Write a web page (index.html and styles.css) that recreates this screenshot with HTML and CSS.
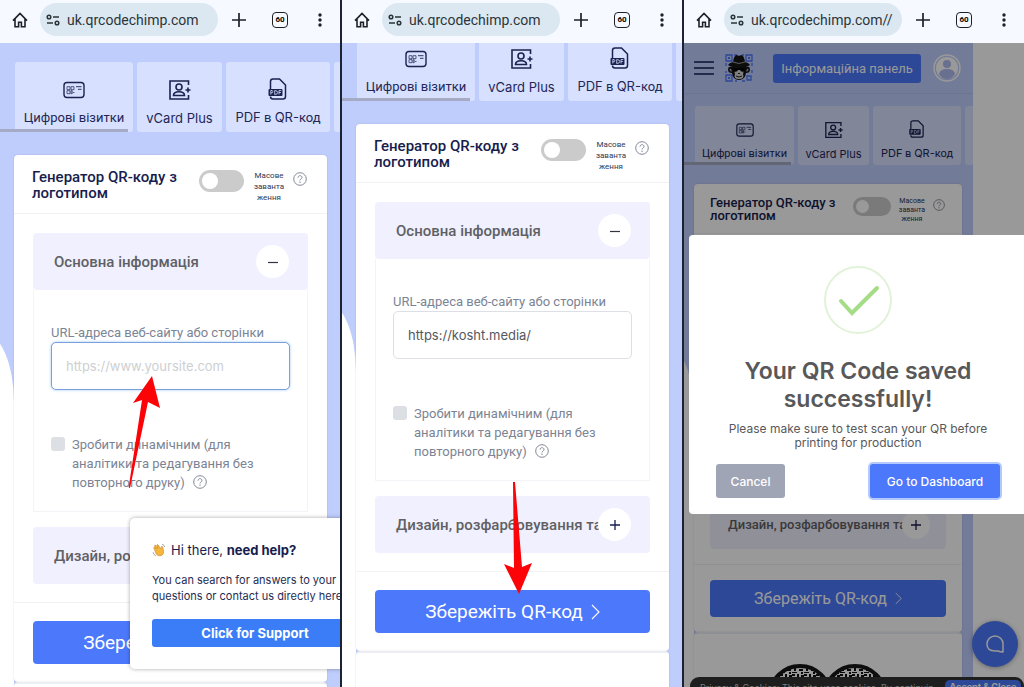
FILE: index.html
```html
<!DOCTYPE html>
<html lang="uk">
<head>
<meta charset="utf-8">
<meta name="viewport" content="width=device-width, initial-scale=1">
<title>QR-код генератор</title>
<link rel="stylesheet" href="styles.css">
</head>
<body>
<svg class="sprite" aria-hidden="true">
  <symbol id="i-home" viewBox="0 0 16 16"><path d="M1 8.6 8 1.4l7 7.2M3 6.8v8h3.600v-4.500h2.800v4.500H13v-8" fill="none" stroke="#1e2126" stroke-width="1.600"/></symbol>
  <symbol id="i-tune" viewBox="0 0 14 12"><g fill="none" stroke="#2b3438" stroke-width="1.500"><circle cx="3" cy="3" r="1.800"/><path d="M7 3h6M1 9h6"/><circle cx="11" cy="9" r="1.800"/></g></symbol>
  <symbol id="i-plus" viewBox="0 0 14 14"><path d="M7 0v14M0 7h14" stroke="#1e2126" stroke-width="1.700"/></symbol>
  <symbol id="i-dots" viewBox="0 0 4 14"><g fill="#1e2126"><circle cx="2" cy="2" r="1.700"/><circle cx="2" cy="7" r="1.700"/><circle cx="2" cy="12" r="1.700"/></g></symbol>
  <symbol id="i-add" viewBox="0 0 10 10"><path d="M5 0v10M0 5h10" stroke="#171d4e" stroke-width="1.300"/></symbol>
  <symbol id="i-sub" viewBox="0 0 10 10"><path d="M0 5.500h10" stroke="#33343f" stroke-width="1.200"/></symbol>
  <symbol id="i-card" viewBox="0 0 22 22"><rect x="1" y="3.500" width="20" height="15" rx="3" fill="none" stroke="#1b2250" stroke-width="1.400"/><path d="M4 7.700h3v3H4zM8 7.700h3v3H8zM4 11.700h3v3H4zM8 11.700h1.200v3H8zM10 13.500h1.500" fill="none" stroke="#1b2250" stroke-width=".7"/><path d="M13 7.700h5.500M15 10.300h3.500" stroke="#1b2250" stroke-width=".9"/></symbol>
  <symbol id="i-vcard" viewBox="0 0 22 22"><g fill="none" stroke="#1b2250" stroke-width="1.600"><path d="M19.500 6V2H1v18h18.500v-4"/><circle cx="10" cy="8" r="3"/><path d="M4.500 16.500c0-5 11-5 11 0z"/><path d="M19 8.500v5M16.500 11h5"/></g></symbol>
  <symbol id="i-pdf" viewBox="0 0 22 22"><path d="M3.500 11V3.500q0-2.500 2.500-2.500h6.500l6 6v11.500q0 2.500-2.500 2.500H6q-2.500 0-2.500-2.500" fill="none" stroke="#1b2250" stroke-width="1.500"/><rect x="1.500" y="11" width="14" height="7" rx="1" fill="#1b2250"/><path d="M3.800 16.500v-4h1.400q1.200 1.200 0 2.300H3.800M7.700 12.500v4q3 0 3-2t-3-2M12 16.500v-4h2.300M12 14.500h1.900" fill="none" stroke="#d6dffd" stroke-width=".8"/></symbol>
  <symbol id="i-help" viewBox="0 0 14 14"><circle cx="7" cy="7" r="6.300" fill="none" stroke="#838996"/><path d="M5 5.700c0-2.700 4-2.700 4-.2 0 1.500-2 1.600-2 3" fill="none" stroke="#838996"/><circle cx="7" cy="10.300" r=".7" fill="#838996"/></symbol>
  <symbol id="i-chevron" viewBox="0 0 9 16"><path d="m1 1 7 7-7 7" fill="none" stroke="#fff" stroke-width="1.100"/></symbol>
</svg>

<main class="board">

<section class="phone">
  <header class="bar">
    <button class="bar-btn" aria-label="Home"><svg class="ic-home"><use href="#i-home"/></svg></button>
    <div class="pill"><svg class="ic-tune"><use href="#i-tune"/></svg><span>uk.qrcodechimp.com</span></div>
    <button class="bar-btn" aria-label="New tab"><svg class="ic-plus"><use href="#i-plus"/></svg></button>
    <button class="bar-btn count">60</button>
    <button class="bar-btn" aria-label="Menu"><svg class="ic-dots"><use href="#i-dots"/></svg></button>
  </header>
  <div class="view"><div class="page">
    <nav class="tabs">
      <a class="tab tab-a" href="#"><svg><use href="#i-card"/></svg><span>Цифрові візитки</span></a>
      <a class="tab tab-b" href="#"><svg><use href="#i-vcard"/></svg><span class="lat">vCard Plus</span></a>
      <a class="tab tab-c" href="#"><svg><use href="#i-pdf"/></svg><span><i class="lat">PDF</i> в <i class="lat">QR-</i>код</span></a>
      <a class="tab tab-d" href="#" aria-label="Далі"></a>
      <span class="scroll"></span>
    </nav>
    <div class="card">
      <div class="card-head">
        <h2>Генератор QR-коду з логотипом</h2>
        <label class="bulk"><input class="switch" type="checkbox"><span>Масове<br>заванта<br>ження</span></label>
        <svg class="help"><use href="#i-help"/></svg>
      </div>
      <div class="card-body">
        <div class="acc">
          <div class="acc-head"><h3>Основна інформація</h3><button class="round" aria-label="Згорнути"><svg><use href="#i-sub"/></svg></button></div>
          <div class="acc-body">
            <label class="field" for="url1">URL-адреса веб-сайту або сторінки</label>
            <input class="url focus" id="url1" type="url" placeholder="https://www.yoursite.com">
            <div class="check"><input type="checkbox" id="dyn1"><label for="dyn1">Зробити динамічним (для аналітики та редагування без повторного друку) <svg class="help"><use href="#i-help"/></svg></label></div>
          </div>
        </div>
        <div class="acc"><div class="acc-head second"><h3>Дизайн, розфарбовування та</h3><button class="round" aria-label="Розгорнути"><svg><use href="#i-add"/></svg></button></div></div>
      </div>
      <div class="card-foot"><button class="save">Збережіть QR-код <svg><use href="#i-chevron"/></svg></button></div>
    </div>
    <div class="card next"></div>
  </div></div>
  <aside class="support">
    <p class="hi"><svg viewBox="0 0 16 16" aria-hidden="true"><path d="M3 8 1.900 5.500q.5-1.200 1.500-.2L5 7 2.800 3.200q.5-1.500 1.700-.3L7 6 5.500 2.300q.7-1.300 1.700 0L9.400 6l.9 1 .2-2.700q1-1.200 1.700.2l1 4.500q.5 4-2.500 5.300-3.500 1.200-5.700-1.500z" fill="#f6b83c" stroke="#c9822a" stroke-width=".7"/><path d="M11.500 1.500q2.500.5 3 3M1.300 10.500q.3 3 3 4" fill="none" stroke="#8b9098" stroke-width=".9"/></svg><span>Hi there, <b>need help?</b></span></p>
    <p class="msg">You can search for answers to your<br>questions or contact us directly here</p>
    <button class="support-btn">Click for Support</button>
  </aside>
  <svg class="arrow arrow-up" viewBox="0 0 32 112"><path d="M24 0 32 32 20 26 2 112Q0 112 1 109L14 24 5 27z" fill="#fb0307"/></svg>
</section>

<section class="phone scrolled">
  <header class="bar">
    <button class="bar-btn" aria-label="Home"><svg class="ic-home"><use href="#i-home"/></svg></button>
    <div class="pill"><svg class="ic-tune"><use href="#i-tune"/></svg><span>uk.qrcodechimp.com</span></div>
    <button class="bar-btn" aria-label="New tab"><svg class="ic-plus"><use href="#i-plus"/></svg></button>
    <button class="bar-btn count">60</button>
    <button class="bar-btn" aria-label="Menu"><svg class="ic-dots"><use href="#i-dots"/></svg></button>
  </header>
  <div class="view"><div class="page">
    <nav class="tabs">
      <a class="tab tab-a" href="#"><svg><use href="#i-card"/></svg><span>Цифрові візитки</span></a>
      <a class="tab tab-b" href="#"><svg><use href="#i-vcard"/></svg><span class="lat">vCard Plus</span></a>
      <a class="tab tab-c" href="#"><svg><use href="#i-pdf"/></svg><span><i class="lat">PDF</i> в <i class="lat">QR-</i>код</span></a>
      <a class="tab tab-d" href="#" aria-label="Далі"></a>
      <span class="scroll"></span>
    </nav>
    <div class="card">
      <div class="card-head">
        <h2>Генератор QR-коду з логотипом</h2>
        <label class="bulk"><input class="switch" type="checkbox"><span>Масове<br>заванта<br>ження</span></label>
        <svg class="help"><use href="#i-help"/></svg>
      </div>
      <div class="card-body">
        <div class="acc">
          <div class="acc-head"><h3>Основна інформація</h3><button class="round" aria-label="Згорнути"><svg><use href="#i-sub"/></svg></button></div>
          <div class="acc-body">
            <label class="field" for="url2">URL-адреса веб-сайту або сторінки</label>
            <input class="url" id="url2" type="url" value="https://kosht.media/">
            <div class="check"><input type="checkbox" id="dyn2"><label for="dyn2">Зробити динамічним (для аналітики та редагування без повторного друку) <svg class="help"><use href="#i-help"/></svg></label></div>
          </div>
        </div>
        <div class="acc"><div class="acc-head second"><h3>Дизайн, розфарбовування та</h3><button class="round" aria-label="Розгорнути"><svg><use href="#i-add"/></svg></button></div></div>
      </div>
      <div class="card-foot"><button class="save">Збережіть QR-код <svg><use href="#i-chevron"/></svg></button></div>
    </div>
    <div class="card next"></div>
  </div></div>
  <svg class="arrow arrow-down" viewBox="0 0 28 112"><path d="M9 0h2l7 85 10-4-13 31L0 82l10 4z" fill="#fb0307"/></svg>
</section>

<section class="phone compact">
  <header class="bar">
    <button class="bar-btn" aria-label="Home"><svg class="ic-home"><use href="#i-home"/></svg></button>
    <div class="pill"><svg class="ic-tune"><use href="#i-tune"/></svg><span>uk.qrcodechimp.com//</span></div>
    <button class="bar-btn" aria-label="New tab"><svg class="ic-plus"><use href="#i-plus"/></svg></button>
    <button class="bar-btn count">60</button>
    <button class="bar-btn" aria-label="Menu"><svg class="ic-dots"><use href="#i-dots"/></svg></button>
  </header>
  <div class="view"><div class="page">
    <div class="site-nav">
      <button class="burger" aria-label="Меню"><svg viewBox="0 0 20 14"><path d="M0 1h20M0 7h20M0 13h20" stroke="#161d55" stroke-width="1.400"/></svg></button>
      <svg class="logo" viewBox="0 0 28 28"><g fill="none" stroke="#4c77fa" stroke-width="1.300"><path d="M1 1h6v6H1zM21 1h6v6h-6zM1 21h6v6H1z"/><path d="M9 1h3M17 1h2M1 9v3M1 17v2M27 9v3M27 16v3M10 27h2M17 27h3M22 22v4h4v-4z"/></g><path d="M3 3h2v2H3zM23 3h2v2h-2zM3 23h2v2H3z" fill="#4c77fa"/><path d="M6 13q-3-1-3 2.500T7 19q1 7 7 7t7-7q4 0 4-3.500T22 13z" fill="#151515"/><path d="M4.500 15q1-1 2 1v2q-2-1-2-3M23.500 15q-1-1-2 1v2q2-1 2-3" fill="#a9a9ad"/><path d="M9 16q5-3 10 0l-1 4q2 5-4 5t-4-5z" fill="#d4d4d8"/><path d="M8 8q1-7 4-7l2 1 2-1q3 0 4 7 4 1 5 3-4 3-11 3T3 11q1-2 5-3" fill="#161616"/><path d="M8 8q6 3 12 0" fill="none" stroke="#aaa" stroke-width=".9"/><path d="M8 14h12l-1 3.500q-3 1-4-1.500h-2q-1 2.500-4 1.500z" fill="#050505"/><path d="M11 22q3 2 6 0M13 19.500h2" fill="none" stroke="#111" stroke-width=".9"/></svg>
      <a class="dash" href="#">Інформаційна панель</a>
      <svg class="avatar" viewBox="0 0 28 28"><circle cx="14" cy="14" r="13" fill="none" stroke="#fff" stroke-width="1.500"/><circle cx="14" cy="14" r="11" fill="#fff"/><circle cx="14" cy="10" r="4" fill="#adb9ee"/><path d="M6 20q1-5 8-5t8 5q-3 5-8 5t-8-5" fill="#adb9ee"/></svg>
    </div>
    <nav class="tabs">
      <a class="tab tab-a" href="#"><svg><use href="#i-card"/></svg><span>Цифрові візитки</span></a>
      <a class="tab tab-b" href="#"><svg><use href="#i-vcard"/></svg><span class="lat">vCard Plus</span></a>
      <a class="tab tab-c" href="#"><svg><use href="#i-pdf"/></svg><span><i class="lat">PDF</i> в <i class="lat">QR-</i>код</span></a>
      <a class="tab tab-d" href="#" aria-label="Далі"></a>
      <span class="scroll"></span>
    </nav>
    <div class="card">
      <div class="card-head">
        <h2>Генератор QR-коду з логотипом</h2>
        <label class="bulk"><input class="switch" type="checkbox"><span>Масове<br>заванта<br>ження</span></label>
        <svg class="help"><use href="#i-help"/></svg>
      </div>
      <div class="card-body">
        <div class="acc"><div class="acc-head"></div><div class="acc-body"></div></div>
        <div class="acc"><div class="acc-head second"><h3>Дизайн, розфарбовування та</h3><button class="round" aria-label="Розгорнути"><svg><use href="#i-add"/></svg></button></div></div>
      </div>
      <div class="card-foot"><button class="save">Збережіть QR-код <svg><use href="#i-chevron"/></svg></button></div>
    </div>
    <div class="card next">
      <svg class="preview" viewBox="0 0 120 26"><defs><pattern id="qr" width="12" height="10" patternUnits="userSpaceOnUse"><path d="M0 0h3v2H0zM5 0h2v4H5zM9 1h3v2H9zM2 4h2v3H2zM7 5h4v2H7zM0 8h5v1H0zM9 8h2v2H9z" fill="#111"/></pattern></defs><circle cx="32" cy="32" r="30" fill="#fff"/><circle cx="32" cy="32" r="30" fill="url(#qr)" stroke="#161616" stroke-width="4"/><circle cx="87" cy="32" r="30" fill="#fff"/><circle cx="87" cy="32" r="30" fill="url(#qr)" stroke="#161616" stroke-width="4"/><path d="M20 26q10-14 22 0M78 26l10-14 12 14" fill="#222"/></svg>
    </div>
  </div></div>
  <div class="cookies"><span>Privacy &amp; Cookies: This site uses cookies. By continuing</span><button>Accept &amp; Close</button></div>
  <button class="chat" aria-label="Chat"><svg viewBox="0 0 20 20"><path d="M18 18V10A8 8 0 0 0 2 10q0 7 8 7h3q2 1 5 1z" fill="none" stroke="#fff" stroke-width="1.500" stroke-linejoin="round"/></svg></button>
  <div class="shade"></div>
  <div class="modal" role="dialog" aria-labelledby="done">
    <svg class="ok" viewBox="0 0 68 68"><circle cx="34" cy="34" r="33" fill="none" stroke="#e2f2d9" stroke-width="2"/><path d="m17 35 11 12 25-25" fill="none" stroke="#a5dc86" stroke-width="4" stroke-linecap="round"/></svg>
    <h1 id="done">Your QR Code saved successfully!</h1>
    <p>Please make sure to test scan your QR before printing for production</p>
    <div class="actions"><button class="cancel">Cancel</button><button class="go">Go to Dashboard</button></div>
  </div>
</section>

</main>
</body>
</html>
```
FILE: styles.css
```css
* { box-sizing: border-box; }
body { margin: 0; font-family: Roboto, "Noto Sans", sans-serif; background: #1b2233; }
button { border: 0; padding: 0; background: none; font: inherit; cursor: pointer; }
a { color: inherit; text-decoration: none; }
h1, h2, h3, p { margin: 0; }
i { font-style: normal; }
svg { display: block; flex: none; }
.sprite { position: absolute; width: 0; height: 0; }
.lat, .url, .support, .modal, .cookies { font-family: Inter, "Noto Sans", sans-serif; }

.board { display: grid; grid-template-columns: 1fr 1fr 1fr; gap: 2px; height: 100vh; }
.phone {
  --side: 13px; --pad: 19px; --tab-h: 70px; --tab-fs: 13px; --icon: 22px; --tab-gap: 4px;
  --head-h: 59px; --title: 15px; --title-lh: 16px; --sw-w: 45px; --sw-h: 22px; --tiny: 8px; --tiny-lh: 11px;
  --acc-h: 57px; --acc-body: 222px; --acc-gap: 15px; --acc-x: 21px; --h3: 15px; --round: 33px;
  --help: 14px; --btn-h: 43px; --btn-fs: 19px; --btn-gap: 18px; --body-top: 19px; --tabs-gap: 23px;
  position: relative; display: flex; flex-direction: column; min-width: 0; overflow: hidden; background: #fff;
}

.bar { display: flex; align-items: center; height: 43px; padding: 0 12px 4px; background: #f6f9ff; color: #1e2126; flex: none; position: relative; }
.bar-btn { display: grid; place-items: center; flex: none; width: 16px; }
.ic-home { width: 16px; height: 16px; }
.pill { display: flex; align-items: center; gap: 7px; flex: 1; min-width: 0; height: 33px; margin: 0 13px 0 12px; padding-left: 6px; border-radius: 17px; background: #dbe8f1; font-size: 14px; color: #2c353a; white-space: nowrap; }
.ic-tune { width: 14px; height: 12px; }
.ic-plus { width: 14px; height: 14px; }
.ic-dots { width: 4px; height: 14px; }
.count { height: 16px; margin: 0 24px 0 25px; border: 1px solid #1e2126; border-radius: 4px; font-size: 8px; line-height: 8px; font-weight: 700; }

.view { flex: 1; min-height: 0; overflow: hidden; position: relative; }
.page { position: relative; min-height: 100%; padding-top: 19px; background: #bfcdfc; overflow: hidden; }
.page::before { content: ""; position: absolute; left: -16px; top: 290px; bottom: 0; width: 30px; background: #fff; border-top-right-radius: 30px 70px; }
.scrolled .page { margin-top: -31px; }

.tabs { position: relative; display: flex; gap: var(--tab-gap); padding-left: 15px; overflow: hidden; color: #1f2757; }
.tab { display: flex; flex: none; flex-direction: column; align-items: center; justify-content: flex-end; gap: 8px; height: var(--tab-h); padding-bottom: 5px; border-radius: 3px; background: #d7e0fe; font-size: var(--tab-fs); line-height: 18px; white-space: nowrap; }
.tab svg { width: var(--icon); height: var(--icon); }
.tab-a { width: 118px; }
.tab-b { width: 85px; }
.tab-c { width: 104px; }
.tab-d { width: 60px; }
.scroll { position: absolute; left: 0; bottom: 0; width: 128px; height: 3px; background: #a5abc4; }

.card { position: relative; margin: var(--tabs-gap) var(--side) 0 14px; border-radius: 4px; background: #fff; box-shadow: 0 0 2px #0002; }
.card.next { margin-top: 0; min-height: 80px; border-top: 2px solid #eceef3; }
.card-head { display: flex; align-items: flex-start; height: var(--head-h); padding: 14px 20px 0 18px; border-bottom: 1px solid #f1f2f6; }
h2 { flex: 1; padding-right: 8px; font-size: var(--title); line-height: var(--title-lh); font-weight: 500; color: #171d4e; }
.bulk { display: flex; gap: 8px; margin-top: 1px; text-align: center; font-size: var(--tiny); line-height: var(--tiny-lh); color: #32364e; }
.switch { appearance: none; flex: none; width: var(--sw-w); height: var(--sw-h); margin: 0; padding: 3px; border-radius: 12px; background: #cbcbcb; }
.switch::before { content: ""; display: block; height: 100%; aspect-ratio: 1; border-radius: 50%; background: #fff; }
.bulk span { width: 34px; }
.help { width: var(--help); height: var(--help); }
.card-head .help { margin: 3px 0 0 7px; }
.card-body { display: grid; gap: var(--acc-gap); padding: var(--body-top) var(--pad) var(--btn-gap); border-bottom: 1px solid #f1f2f6; }
.acc { min-width: 0; }
.acc-head { display: flex; align-items: center; justify-content: space-between; height: var(--acc-h); padding: 0 19px 0 var(--acc-x); border-radius: 4px; background: #f0f0ff; }
h3 { width: 0; flex: 1; font-size: var(--h3); line-height: 20px; font-weight: 500; color: #606064; white-space: nowrap; }
.round { display: grid; place-items: center; width: var(--round); height: var(--round); flex: none; border-radius: 50%; background: #fff; position: relative; }
.round svg { width: 10px; height: 10px; }
.acc-body { height: var(--acc-body); padding: 34px 17px 0; border: 1px solid #f3f4f8; border-top: 0; }
.field { display: block; font-size: 13px; line-height: 18px; color: #7b8494; white-space: nowrap; }
.url { width: 100%; height: 48px; padding: 0 14px; border: 1px solid #dcdfe5; border-radius: 5px; background: #fff; font-size: 13px; color: #55575e; outline: 0; }
.url.focus { border-color: #7ba0dc; box-shadow: 0 0 3px #9cc8f6; }
.url::placeholder { color: #cdcfd3; opacity: 1; }
.check { display: flex; gap: 7px; margin-top: 45px; font-size: 13px; line-height: 19px; color: #7b8494; }
.check input { appearance: none; flex: none; width: 14px; height: 14px; margin: 2px 0 0; border-radius: 3px; background: #dcdfe4; }
.check .help { display: inline-block; margin-left: 5px; vertical-align: -2px; }
.card-foot { padding: var(--btn-gap) var(--pad); }
.save { display: flex; align-items: center; justify-content: center; gap: 8px; width: 100%; height: var(--btn-h); border-radius: 4px; background: #4c78fb; color: #fff; font-size: var(--btn-fs); white-space: nowrap; }
.save svg { width: 9px; height: 16px; }

.support { position: absolute; left: 130px; top: 518px; width: 252px; padding: 22px; border-radius: 5px; background: #fff; box-shadow: 0 0 4px #0005; color: #262c52; }
.hi { display: flex; align-items: center; gap: 5px; font-size: 13px; line-height: 20px; color: #171d4e; white-space: nowrap; }
.hi svg { width: 14px; height: 14px; }
.msg { margin: 12px 0 15px; font-size: 11px; line-height: 16px; white-space: nowrap; }
.support-btn { width: 206px; height: 28px; border-radius: 3px; background: #3b7df6; color: #fff; font-size: 13px; font-weight: 700; }
.arrow { position: absolute; }
.arrow-up { left: 128px; top: 376px; width: 32px; height: 112px; }
.arrow-down { left: 162px; top: 482px; width: 28px; height: 112px; }

.compact {
  --side: 11px; --pad: 16px; --tab-h: 59px; --tab-fs: 11px; --icon: 18px;
  --head-h: 50px; --title: 13px; --title-lh: 13px; --sw-w: 38px; --sw-h: 19px; --tiny: 7px; --tiny-lh: 9px;
  --acc-h: 49px; --acc-body: 188px; --acc-gap: 13px; --acc-x: 18px; --h3: 13px; --round: 28px;
  --help: 12px; --btn-h: 37px; --btn-fs: 16px; --btn-gap: 15px; --body-top: 16px; --tabs-gap: 19px;
}
.compact .page { width: 85%; padding-top: 0; }
.compact .page::before { left: -20px; top: 300px; }
.compact .card { margin-left: 10px; }
.site-nav { display: flex; align-items: center; height: 51px; padding: 0 12px 0 10px; border-bottom: 1px solid #b3c1f0; margin-bottom: 12px; }
.burger { width: 20px; height: 20px; }
.burger svg { width: 20px; height: 14px; }
.logo { width: 28px; height: 28px; margin-left: 11px; }
.dash { flex: 1; margin: 0 12px 0 20px; border-radius: 3px; background: #4c78fb; color: #fff; text-align: center; font-size: 13px; line-height: 29px; white-space: nowrap; }
.avatar { width: 28px; height: 28px; }
.compact .tabs { padding-left: 11px; }
.compact .tab { gap: 6px; padding-bottom: 2px; }
.compact .tab-a { width: 99px; }
.compact .tab-b { width: 71px; }
.compact .tab-c { width: 88px; }
.compact .scroll { width: 107px; }
.compact .card-head { padding: 12px 17px 0 16px; }
.compact .bulk { gap: 7px; margin-top: 1px; }
.compact .bulk span { width: 28px; }
.compact .acc-head { padding-right: 16px; }
.compact .save svg { width: 7px; height: 13px; }
.preview { width: 120px; height: 26px; margin: 30px auto 0; }
.cookies { position: absolute; left: 6px; right: 0; bottom: -20px; display: flex; align-items: flex-start; gap: 12px; height: 30px; padding: 3px 3px 0 10px; border-radius: 9px; background: #333; color: #ccc; font-size: 9px; line-height: 11px; overflow: hidden; white-space: nowrap; }
.cookies span { flex: 1; width: 0; overflow: hidden; padding-top: 2px; }
.cookies button { display: flex; justify-content: center; width: 76px; height: 22px; padding-top: 1px; border-radius: 5px; background: #4c78fb; color: #fff; font-size: 9px; font-weight: 700; }
.chat { position: absolute; right: 6px; bottom: 20px; display: grid; place-items: center; width: 46px; height: 46px; border-radius: 50%; background: #4c78fb; box-shadow: 0 1px 5px #0005; }
.chat svg { width: 20px; height: 20px; }
.shade { position: absolute; inset: 43px 0 0; background: #0006; }
.modal { position: absolute; left: 5px; top: 235px; width: 338px; padding: 31px 27px 16px; border-radius: 4px; background: #fff; text-align: center; color: #58585a; }
.ok { width: 68px; height: 68px; margin: 0 auto 23px; }
.modal h1 { font-size: 23px; line-height: 28px; font-weight: 600; }
.modal p { margin: 9px 0 14px; font-size: 12px; line-height: 14px; }
.actions { display: flex; justify-content: space-between; }
.actions button { height: 34px; border-radius: 3px; color: #fff; font-size: 12px; font-weight: 500; }
.cancel { width: 69px; background: #9fa5b5; }
.actions .go { width: 130px; background: #4c78fb; box-shadow: 0 0 0 2px #b4cafc; }
```
